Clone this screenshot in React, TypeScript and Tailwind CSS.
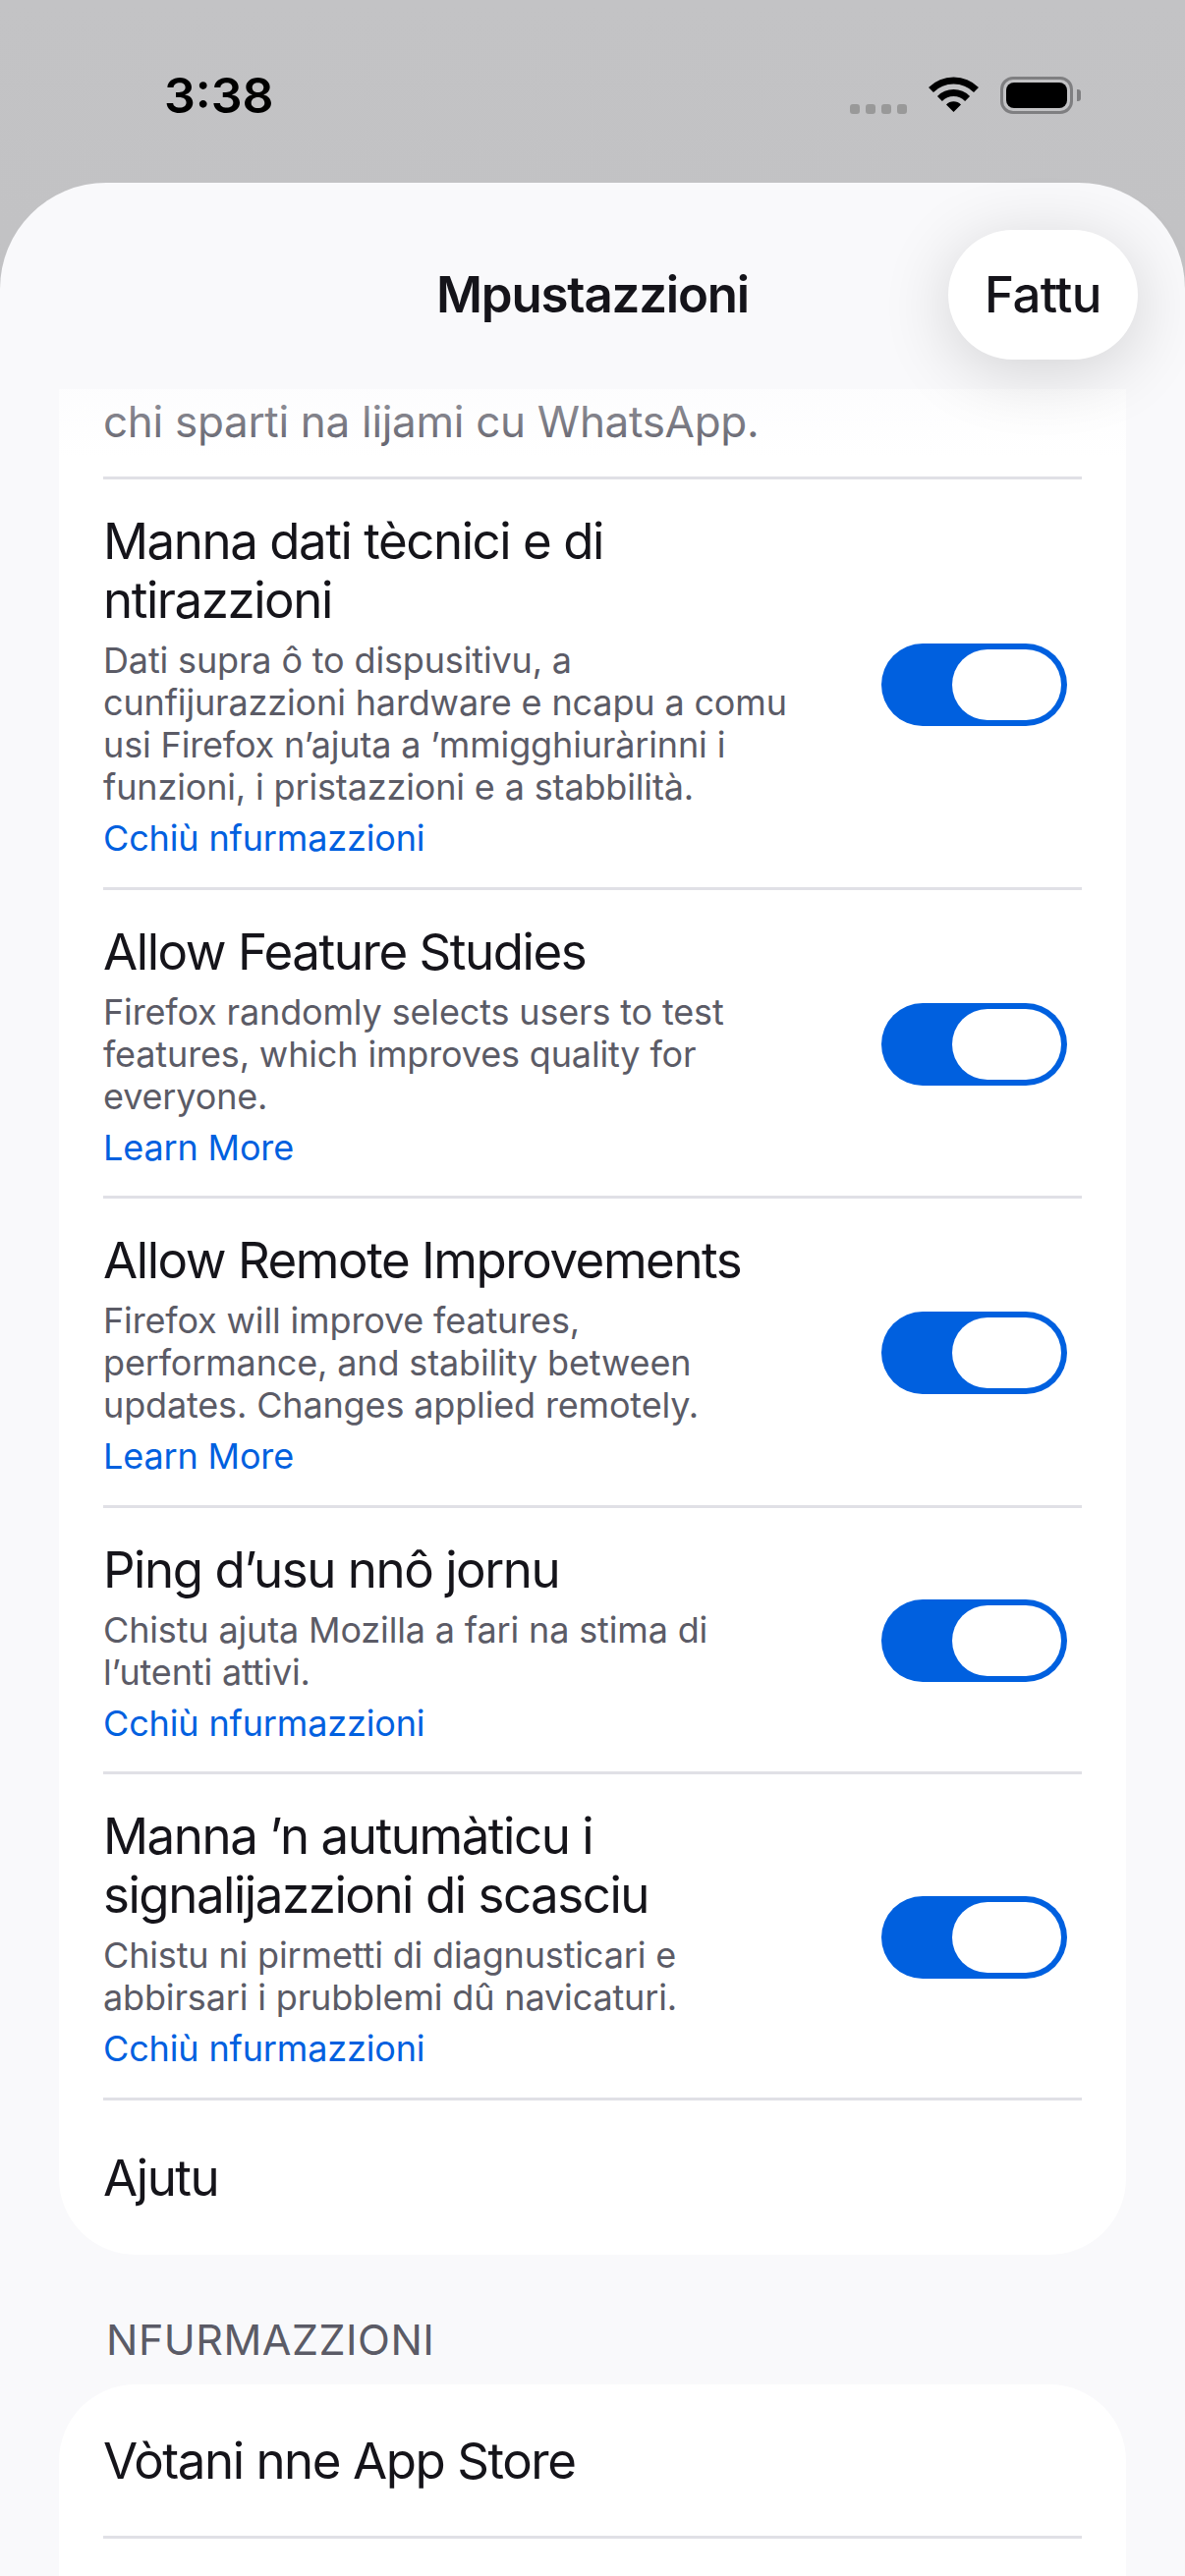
import React from 'react';

type Row = {
  title: string[];
  sub: string[];
  link: string;
};

const ROWS: Row[] = [
  {
    title: ['Manna dati tècnici e di', 'ntirazzioni'],
    sub: [
      'Dati supra ô to dispusitivu, a',
      'cunfijurazzioni hardware e ncapu a comu',
      'usi Firefox n’ajuta a ’mmigghiuràrinni i',
      'funzioni, i pristazzioni e a stabbilità.',
    ],
    link: 'Cchiù nfurmazzioni',
  },
  {
    title: ['Allow Feature Studies'],
    sub: [
      'Firefox randomly selects users to test',
      'features, which improves quality for',
      'everyone.',
    ],
    link: 'Learn More',
  },
  {
    title: ['Allow Remote Improvements'],
    sub: [
      'Firefox will improve features,',
      'performance, and stability between',
      'updates. Changes applied remotely.',
    ],
    link: 'Learn More',
  },
  {
    title: ['Ping d’usu nnô jornu'],
    sub: ['Chistu ajuta Mozilla a fari na stima di', 'l’utenti attivi.'],
    link: 'Cchiù nfurmazzioni',
  },
  {
    title: ['Manna ’n autumàticu i', 'signalijazzioni di scasciu'],
    sub: ['Chistu ni pirmetti di diagnusticari e', 'abbirsari i prubblemi dû navicaturi.'],
    link: 'Cchiù nfurmazzioni',
  },
];

const Separator = () => <div className="h-[3px] bg-[#e0e0e6]" />;

const Toggle = () => (
  <div className="flex h-[84px] w-[189px] shrink-0 items-center justify-end rounded-full bg-[#0060df] pr-[6px]">
    <div className="h-[72px] w-[111px] rounded-full bg-white" />
  </div>
);

const WifiIcon = () => (
  <svg width="51" height="38" viewBox="0 0 51 38" fill="none">
    <path d="M2.5 13.5a32.5 32.5 0 0 1 46 0" stroke="#000" strokeWidth="7" />
    <path d="M11.4 22.4a20 20 0 0 1 28.2 0" stroke="#000" strokeWidth="7" />
    <path d="M18 28.5a10.5 10.5 0 0 1 15 0L25.5 36z" fill="#000" />
  </svg>
);

const BatteryIcon = () => (
  <div className="flex items-center gap-[4px]">
    <div className="flex h-[38px] w-[74px] rounded-[13px] border-[3px] border-[#7f7f81] p-[3px]">
      <div className="flex-1 rounded-[8px] bg-black" />
    </div>
    <div className="h-[12px] w-[4px] rounded-r-[3px] bg-[#7f7f81]" />
  </div>
);

const StatusBar = () => (
  <div className="flex h-[186px] items-start justify-between pl-[167px] pr-[106px] pt-[78px]">
    <div className="text-[50px] leading-[39px] font-semibold text-black">3:38</div>
    <div className="flex items-start">
      <div className="mt-[28px] flex gap-[6px]">
        <div className="h-[10px] w-[10px] rounded-[3px] bg-[#999999]" />
        <div className="h-[10px] w-[10px] rounded-[3px] bg-[#999999]" />
        <div className="h-[10px] w-[10px] rounded-[3px] bg-[#999999]" />
        <div className="h-[10px] w-[10px] rounded-[3px] bg-[#999999]" />
      </div>
      <div className="ml-[22px]">
        <WifiIcon />
      </div>
      <div className="ml-[22px]">
        <BatteryIcon />
      </div>
    </div>
  </div>
);

const SettingRow = ({ row }: { row: Row }) => (
  <div className="flex items-center justify-between pt-[33px] pb-[27.5px]">
    <div className="min-w-0">
      <div className="text-[51px] leading-[60px] tracking-[-1.45px] text-[#15141a]">
        {row.title.map(line => (
          <div key={line} className="whitespace-nowrap">{line}</div>
        ))}
      </div>
      <div className="mt-[10px] text-[36px] leading-[43px] tracking-[-0.15px] text-[#5b5b66]">
        {row.sub.map(line => (
          <div key={line} className="whitespace-nowrap">{line}</div>
        ))}
      </div>
      <div className="mt-[9px] text-[36px] leading-[43px] tracking-[-0.15px] text-[#0060df]">{row.link}</div>
    </div>
    <div className="mr-[15px] mb-[3px]">
      <Toggle />
    </div>
  </div>
);

const App: React.FC = () => {
  return (
    <div className="flex h-[2622px] flex-col overflow-hidden bg-gradient-to-b from-[#c3c3c5] to-[#b8b8ba] font-['Inter','Liberation_Sans',sans-serif]">
      <StatusBar />

      <div className="flex min-h-0 flex-1 flex-col rounded-t-[108px] bg-[#f9f9fb]">
        {/* header */}
        <div className="relative z-10 flex h-[210px] shrink-0 items-center justify-center">
          <div className="mt-[18px] text-[51px] font-semibold tracking-[-1.2px] text-[#15141a]">Mpustazzioni</div>
          <div className="absolute right-[48px] top-[48px] flex h-[132px] w-[193px] items-center justify-center rounded-full bg-white text-[51px] font-medium tracking-[-0.6px] text-[#15141a] shadow-[0_12px_70px_rgba(0,0,0,0.16)]">
            Fattu
          </div>
        </div>

        <div className="relative min-h-0 flex-1 overflow-hidden">
          {/* fade under the header */}
          <div className="absolute inset-x-0 top-0 h-[70px] bg-gradient-to-b from-[#f9f9fb]/40 to-transparent" />

          <div className="mx-[60px] rounded-b-[78px] bg-white px-[45px]">
            <div className="pt-[12px] pb-[34px] text-[44px] leading-[43px] tracking-[-0.3px] text-[#5b5b66]">
              chi sparti na lijami cu WhatsApp.
            </div>
            <Separator />
            {ROWS.map(row => (
              <React.Fragment key={row.title[0]}>
                <SettingRow row={row} />
                <Separator />
              </React.Fragment>
            ))}
            <div className="flex h-[157px] items-center pt-[3px] text-[51px] tracking-[-1.45px] text-[#15141a]">Ajutu</div>
          </div>

          <div className="mt-[60px] ml-[108px] text-[43px] leading-[52px] tracking-[0.5px] text-[#5b5b66]">NFURMAZZIONI</div>

          <div className="mx-[60px] mt-[20px] rounded-t-[78px] bg-white px-[45px]">
            <div className="flex h-[154px] items-center pt-[4px] text-[51px] tracking-[-1.45px] text-[#15141a]">Vòtani nne App Store</div>
            <Separator />
            <div className="h-[154px]" />
          </div>
        </div>
      </div>
    </div>
  );
};

export default App;
